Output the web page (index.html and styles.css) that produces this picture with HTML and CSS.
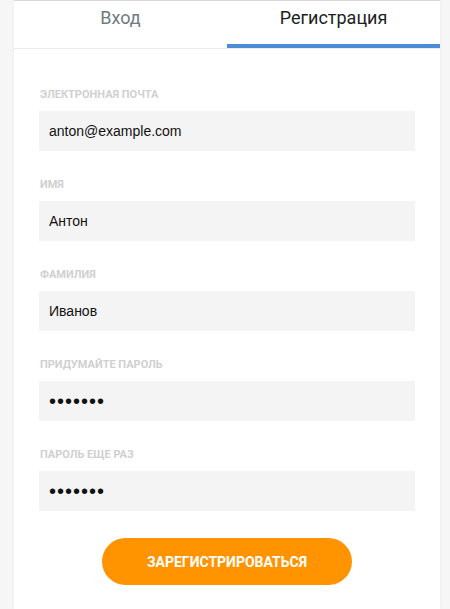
FILE: index.html
```html
<!DOCTYPE html>
<html>
	<head>
		<meta charset="utf-8">
		<title>Регистрация</title>
		<link rel="stylesheet" href="styles.css">
	</head>
	<body>
		<div class="card">
			<!-- вкладки -->
			<div class="tabs">
				<div class="tab">Вход</div>
				<div class="tab active">Регистрация</div>
			</div>

			<!-- форма регистрации -->
			<form class="form">
				<div class="field">
					<label class="label">Электронная почта</label>
					<input class="input" type="text" value="anton@example.com">
				</div>
				<div class="field">
					<label class="label">Имя</label>
					<input class="input" type="text" value="Антон">
				</div>
				<div class="field">
					<label class="label">Фамилия</label>
					<input class="input" type="text" value="Иванов">
				</div>
				<div class="field">
					<label class="label">Придумайте пароль</label>
					<input class="input" type="password" value="1234567">
				</div>
				<div class="field">
					<label class="label">Пароль еще раз</label>
					<input class="input" type="password" value="1234567">
				</div>
				<button class="submit" type="button">Зарегистрироваться</button>
			</form>
		</div>
	</body>
</html>
```

FILE: styles.css
```css
/* общие стили */
* {
	margin: 0;
	padding: 0;
	box-sizing: border-box;
}

body {
	font-family: Roboto, "Liberation Sans", sans-serif;
	background-color: #f6f6f6;
	height: 100vh;
	overflow: hidden;
}

/* карточка */
.card {
	margin: 0 10px 0 14px;
	min-height: 100vh;
	background-color: #fff;
	border-top: 1px solid #d8d8d8;
	box-shadow: 0 0 3px rgba(0,0,0,0.06);
}

/* вкладки */
.tabs {
	display: flex;
	border-bottom: 1px solid #ececec;
}

.tab {
	flex: 1;
	height: 47px;
	padding-top: 5px;
	text-align: center;
	font-size: 18px;
	line-height: 24px;
	color: #6f7b80;
	border-bottom: 4px solid transparent;
}

.tab.active {
	color: #1e1e1e;
	border-bottom-color: #4e8bd6;
}

/* форма */
.form {
	padding: 39px 25px 0;
	display: flex;
	flex-direction: column;
}

.field {
	display: flex;
	flex-direction: column;
	margin-bottom: 27px;
}

.label {
	font-size: 11px;
	line-height: 14px;
	font-weight: bold;
	text-transform: uppercase;
	color: #d0d0d0;
	padding-left: 1px;
	margin-bottom: 9px;
}

.input {
	height: 40px;
	border: none;
	outline: none;
	background-color: #f4f4f4;
	padding: 0 10px;
	font-family: "Liberation Sans", Arial, sans-serif;
	font-size: 14px;
	color: #111;
}

.input[type="password"] {
	font-size: 20px;
	letter-spacing: 1px;
}

.submit {
	align-self: center;
	width: 250px;
	height: 47px;
	border: none;
	border-radius: 24px;
	background-color: #ff9400;
	color: #fff;
	font-family: Roboto, "Liberation Sans", sans-serif;
	font-weight: bold;
	font-size: 14px;
	text-transform: uppercase;
}
```
